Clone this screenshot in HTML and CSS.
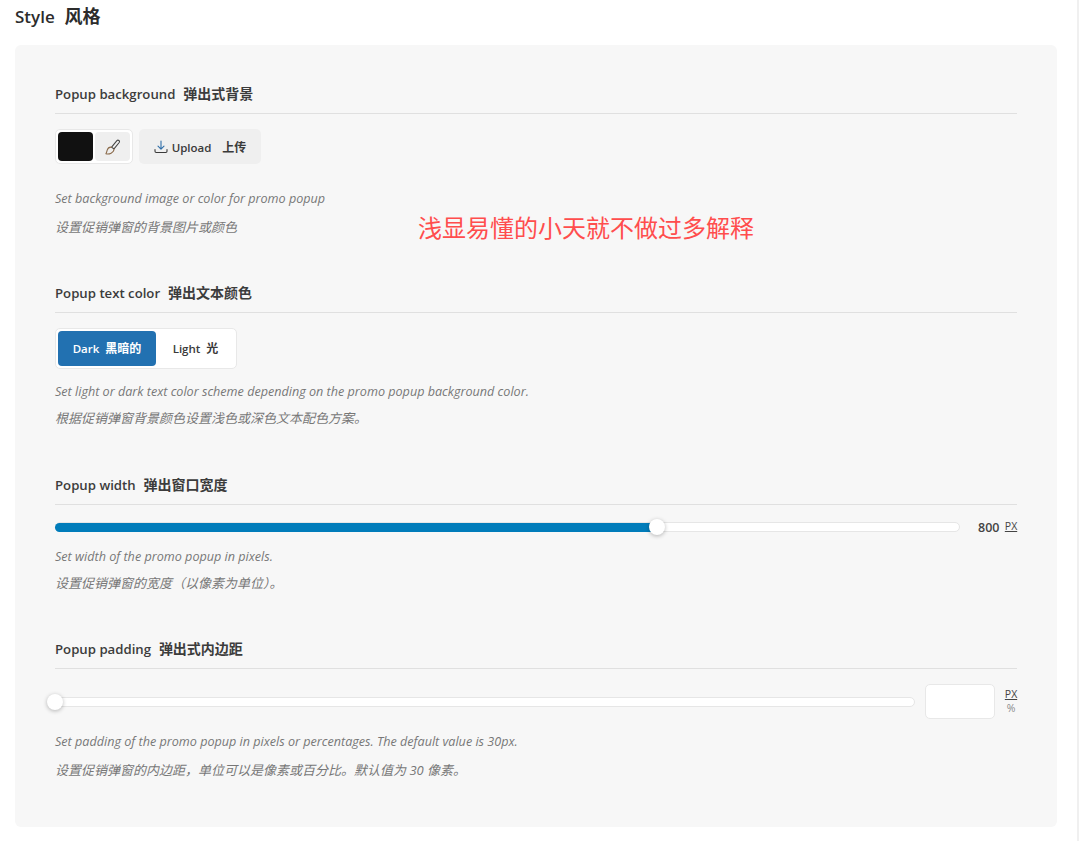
FILE: index.html
```html
<!DOCTYPE html>
<html lang="zh">
<head>
<meta charset="utf-8">
<title>Style</title>
<link rel="stylesheet" href="styles.css">
</head>
<body>
<main class="page">
  <h1 class="page-title">Style&nbsp; <span class="zh">风格</span></h1>
  <div class="card">
    <section class="field field-bg">
      <h2 class="field-title">Popup background&nbsp; <span class="zh">弹出式背景</span></h2>
      <div class="row">
        <div class="picker">
          <span class="swatch"></span>
          <span class="brush">
            <svg width="16" height="16" viewBox="0 0 16 16" fill="none" stroke="#444" stroke-width="1.050" stroke-linecap="round" stroke-linejoin="round"><path d="M6.600 8.200 11.900 1.600a1.500 1.500 0 0 1 2.300 1.900L9 9.900z"/><path d="M6.600 8.200C4.400 7.900 2.800 9.200 2.200 11.200c-.3 1-.6 2.300-1.300 3.600 1.800.4 3.700.2 5.200-.6 1.900-1 3-2.500 2.900-4.300" stroke="#8a6a4a"/></svg>
          </span>
        </div>
        <button class="upload" type="button">
          <svg class="upload-icon" width="14" height="14" viewBox="0 0 14 14" fill="none" stroke-width="1.100" stroke-linecap="round" stroke-linejoin="round"><path stroke="#2f6ea8" d="M7 1v8M4 6.200 7 9.200l3-3"/><path stroke="#3a3a3a" d="M1 9.500v1.800a1.200 1.200 0 0 0 1.200 1.200h9.600a1.200 1.200 0 0 0 1.200-1.200V9.500"/></svg>
          <span class="upload-text">Upload &nbsp; <span class="zh-btn">上传</span></span>
        </button>
      </div>
      <p class="desc">Set background image or color for promo popup</p>
      <p class="desc desc-zh">设置促销弹窗的背景图片或颜色</p>
    </section>

    <section class="field field-color">
      <h2 class="field-title">Popup text color&nbsp; <span class="zh">弹出文本颜色</span></h2>
      <div class="toggle">
        <span class="opt opt-on"><span>Dark&nbsp; <span class="zh-btn">黑暗的</span></span></span>
        <span class="opt"><span>Light&nbsp; <span class="zh-btn">光</span></span></span>
      </div>
      <p class="desc">Set light or dark text color scheme depending on the promo popup background color.</p>
      <p class="desc desc-zh">根据促销弹窗背景颜色设置浅色或深色文本配色方案。</p>
    </section>

    <section class="field field-width">
      <h2 class="field-title">Popup width&nbsp; <span class="zh">弹出窗口宽度</span></h2>
      <div class="row slider-row">
        <div class="track">
          <span class="fill" style="width:66.700%"></span>
          <span class="thumb" style="left:66.700%"></span>
        </div>
        <span class="value">800</span>
        <div class="units"><span class="unit unit-on">PX</span></div>
      </div>
      <p class="desc">Set width of the promo popup in pixels.</p>
      <p class="desc desc-zh">设置促销弹窗的宽度（以像素为单位）。</p>
    </section>

    <section class="field field-padding">
      <h2 class="field-title">Popup padding&nbsp; <span class="zh">弹出式内边距</span></h2>
      <div class="row slider-row padding-row">
        <div class="track">
          <span class="thumb" style="left:0"></span>
        </div>
        <input class="num" type="text" aria-label="Popup padding">
        <div class="units"><span class="unit unit-on">PX</span><span class="unit">%</span></div>
      </div>
      <p class="desc">Set padding of the promo popup in pixels or percentages. The default value is 30px.</p>
      <p class="desc desc-zh">设置促销弹窗的内边距，单位可以是像素或百分比。默认值为 30 像素。</p>
    </section>

    <div class="note">浅显易懂的小天就不做过多解释</div>
  </div>
</main>
</body>
</html>
```

FILE: styles.css
```css
* { box-sizing: border-box; }
html, body { margin: 0; padding: 0; }
body {
  background: #fff;
  font-family: "Open Sans", "Noto Sans CJK SC", sans-serif;
  color: #333;
  height: 841px;
  overflow: hidden;
  border-right: 2px solid #f0f0f0;
}
.page { padding: 0 20px 0 15px; }
.page-title {
  margin: 0;
  height: 45px;
  padding-top: 4px;
  font-size: 17px;
  line-height: 24px;
  font-weight: 600;
  color: #2c2c2c;
}
.page-title .zh { font-size: 18px; }
.card {
  position: relative;
  background: #f7f7f7;
  border-radius: 6px;
  height: 782px;
  padding: 40px 40px 0;
}
.field-title {
  margin: 0 0 15px;
  height: 29px;
  padding-bottom: 9px;
  border-bottom: 1px solid #e0e0e0;
  font-size: 13.200px;
  line-height: 17px;
  font-weight: 600;
  color: #3c3c3c;
}
.zh { font-size: 14px; margin-left: 1px; }
.zh-btn { font-size: 12px; }
.field-bg { height: 199px; }
.field-color { height: 192px; }
.field-width { height: 164px; }
.row { display: flex; align-items: flex-start; }
.picker {
  display: flex;
  gap: 2px;
  width: 78px;
  height: 35px;
  padding: 2px;
  background: #fff;
  border: 1px solid #e8e8e8;
  border-radius: 5px;
}
.swatch { width: 35px; height: 29px; background: #111; border-radius: 4px; }
.brush {
  flex: 1;
  display: flex;
  align-items: center;
  justify-content: center;
  background: #efefef;
  border-radius: 4px;
}
.upload {
  display: flex;
  align-items: center;
  justify-content: center;
  gap: 4px;
  width: 122px;
  height: 35px;
  margin-left: 6px;
  padding: 0;
  border: 0;
  border-radius: 5px;
  background: #efefef;
  font: 600 11.500px/16px "Open Sans", "Noto Sans CJK SC", sans-serif;
  color: #3a3a3a;
}
.upload-text { position: relative; top: 1px; }
.upload-text .zh-btn { margin-left: 2px; }
.desc {
  margin: 0;
  font-size: 12.600px;
  line-height: 27px;
  font-style: italic;
  color: #777;
}
.desc-zh { font-size: 13px; }
.field-bg .desc, .field-padding .desc { line-height: 28px; }
.field-bg .desc:first-of-type { margin-top: 21px; }
.field-color .desc:first-of-type { margin-top: 9px; }
.field-width .desc:first-of-type { margin-top: 9px; }
.field-padding .desc:first-of-type { margin-top: 9px; }
.toggle {
  display: flex;
  width: 182px;
  height: 41px;
  padding: 2px;
  background: #fff;
  border: 1px solid #e8e8e8;
  border-radius: 5px;
}
.opt {
  display: flex;
  align-items: center;
  justify-content: center;
  flex: 1;
  padding: 0 0 2px 1px;
  font-size: 11.500px;
  font-weight: 600;
  color: #3a3a3a;
}
.opt-on {
  flex: 0 0 98px;
  padding-left: 0;
  background: #2271b1;
  color: #fff;
  border-radius: 4px;
}
.slider-row { align-items: center; height: 14px; margin-top: 15px; }
.track {
  position: relative;
  flex: 1;
  height: 10px;
  background: #fff;
  border: 1px solid #e6e6e6;
  border-radius: 5px;
}
.fill {
  position: absolute;
  left: -1px;
  top: 0;
  height: 9px;
  background: #007cba;
  border-radius: 5px 0 0 5px;
}
.thumb {
  position: absolute;
  top: 50%;
  width: 16px;
  height: 16px;
  margin: -8px 0 0 -9px;
  background: #fff;
  border-radius: 50%;
  box-shadow: 0 1px 4px rgba(0, 0, 0, .28);
}
.value {
  margin-left: 18px;
  width: 22px;
  font-size: 12.500px;
  font-weight: 600;
  color: #444;
}
.units {
  display: flex;
  flex-direction: column;
  align-items: center;
  margin-left: 5px;
  width: 12px;
  padding-bottom: 2px;
}
.unit {
  font-size: 10.500px;
  line-height: 14px;
  color: #8a8a8a;
}
.unit-on { color: #444; text-decoration: underline; }
.padding-row { height: 35px; margin-top: 0; }
.num {
  width: 70px;
  height: 35px;
  margin-left: 10px;
  padding: 0;
  background: #fff;
  border: 1px solid #e8e8e8;
  border-radius: 5px;
}
.padding-row .units { margin-left: 10px; }
.note {
  position: absolute;
  left: 403px;
  top: 166px;
  font-size: 24px;
  line-height: 34px;
  color: #ff4d4d;
  white-space: nowrap;
}
```
